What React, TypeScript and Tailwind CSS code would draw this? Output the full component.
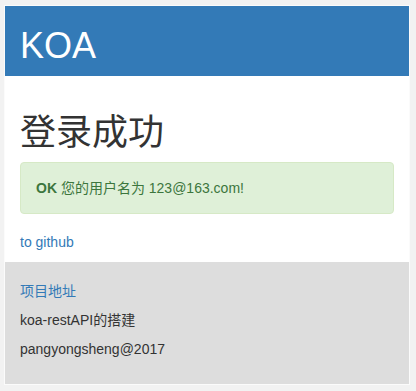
export default function App() {
  const font = { fontFamily: '"Liberation Sans", Arial, "Noto Sans CJK SC", sans-serif' };
  return (
    <div className="min-h-[391px] bg-[#f2f2f2] pl-[4px] pt-[5px]" style={font}>
      <div className="w-[406px] border border-[#fbfbfb] text-[14px] leading-[20px] text-[#333]">
        {/* Header */}
        <header className="flow-root bg-[#337ab7] px-[15px]">
          <h1 className="mt-[20px] mb-[10px] text-[36px] leading-[39.6px] text-white">KOA</h1>
        </header>

        {/* Content */}
        <main className="bg-white px-[15px] pt-[17px] pb-[10px]">
          <h1 className="mt-[20px] mb-[10px] text-[36px] leading-[39.6px] text-[#333]">登录成功</h1>
          <div className="mb-[18px] rounded-[4px] border border-[#d6e9c6] bg-[#dff0d8] p-[15px] text-[#3c763d]">
            <strong className="font-bold">OK</strong> 您的用户名为 123@163.com!
          </div>
          <p className="mb-0">
            <a href="#" className="text-[#337ab7]">to github</a>
          </p>
        </main>

        {/* Footer */}
        <footer className="bg-[#dddddd] px-[15px] pt-[20px] pb-[25px]">
          <p className="mb-[10px] leading-[19px]">
            <a href="#" className="text-[#337ab7]">项目地址</a>
          </p>
          <p className="mb-[10px] leading-[19px]">koa-restAPI的搭建</p>
          <p className="leading-[19px]">pangyongsheng@2017</p>
        </footer>
      </div>
    </div>
  );
}
